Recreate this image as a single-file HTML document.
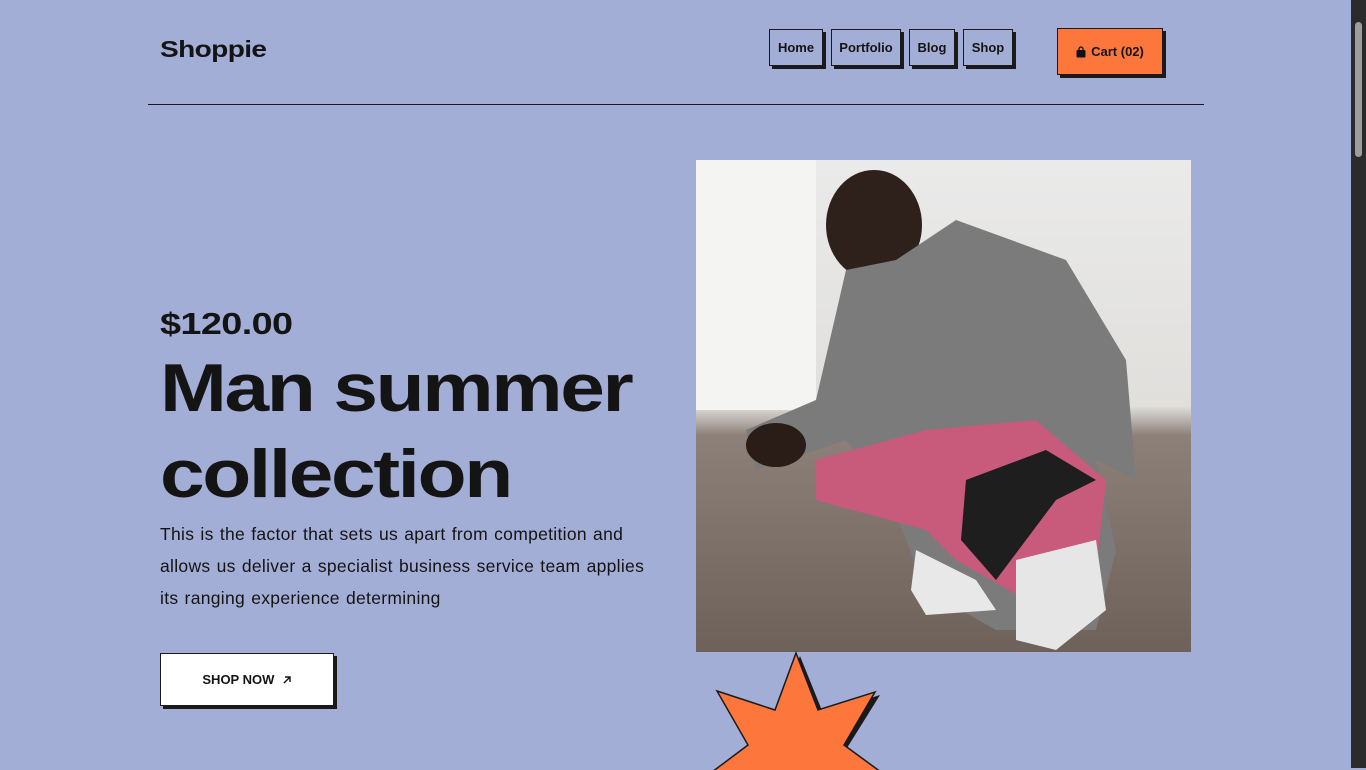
<!DOCTYPE html>
<html><head><style>
body{margin:0;width:1366px;height:768px;overflow:hidden;background:#a3aed6;font-family:"Liberation Sans",sans-serif;position:relative;color:#141414}
.logo{position:absolute;left:160px;top:36px;font-size:23px;font-weight:900;letter-spacing:-0.5px;transform:scaleX(1.22);transform-origin:left}
.nav{position:absolute;top:29px;height:37px;border:1px solid #1a1a1a;box-shadow:3px 3px 0 #1a1a1a;font-size:13px;font-weight:bold;display:flex;align-items:center;justify-content:center;box-sizing:border-box}
.cart{position:absolute;left:1057px;top:28px;width:106px;height:47px;background:#fd773d;border:1px solid #1a1a1a;box-shadow:3px 3px 0 #1a1a1a;box-sizing:border-box;font-size:13px;font-weight:bold;display:flex;align-items:center;justify-content:center;gap:5px}
.line{position:absolute;left:148px;top:104px;width:1056px;height:1px;background:#1a1a1a}
.price{position:absolute;left:160px;top:306px;font-size:31px;font-weight:900;letter-spacing:-0.5px;transform:scaleX(1.22);transform-origin:left}
h1{position:absolute;left:160px;top:345px;margin:0;font-size:68px;line-height:86px;font-weight:900;letter-spacing:-2px;transform:scaleX(1.18);transform-origin:left}
p{position:absolute;left:160px;top:518px;margin:0;width:510px;font-size:17.5px;line-height:32px;letter-spacing:0.3px;word-spacing:1px}
.shop{position:absolute;left:160px;top:653px;width:174px;height:53px;background:#fff;border:1px solid #1a1a1a;box-shadow:3px 3px 0 #1a1a1a;box-sizing:border-box;font-size:13px;font-weight:bold;display:flex;align-items:center;justify-content:center}
.photo{position:absolute;left:696px;top:160px;width:495px;height:492px;background:linear-gradient(180deg,#eaeaea 0,#e0dfdc 50%,#8c8078 56%,#6e6159 100%);overflow:hidden}
.sb{position:absolute;right:0;top:0;width:15px;height:768px;background:#2b2b2b}
.sb div{position:absolute;left:4px;top:22px;width:7px;height:135px;background:#9d9d9d;border-radius:4px}
</style></head><body>
<div class="logo">Shoppie</div>
<div class="nav" style="left:769px;width:54px">Home</div>
<div class="nav" style="left:831px;width:70px">Portfolio</div>
<div class="nav" style="left:909px;width:46px">Blog</div>
<div class="nav" style="left:963px;width:50px">Shop</div>
<div class="cart"><svg width="10" height="12" viewBox="0 0 10 12"><path d="M3 4V3a2 2 0 0 1 4 0v1" fill="none" stroke="#111" stroke-width="1.3"/><rect x="0.5" y="4" width="9" height="7.5" rx="1" fill="#111"/></svg>Cart (02)</div>
<div class="line"></div>
<div class="price">$120.00</div>
<h1>Man summer<br>collection</h1>
<p>This is the factor that sets us apart from competition and<br>allows us deliver a specialist business service team applies<br>its ranging experience determining</p>
<div class="shop">SHOP NOW&nbsp;&nbsp;<svg width="10" height="10" viewBox="0 0 10 10"><path d="M2 8L8 2M3 2h5v5" fill="none" stroke="#111" stroke-width="1.4"/></svg></div>
<div class="photo">
<svg width="495" height="492" viewBox="0 0 495 492">
<rect x="0" y="0" width="120" height="250" fill="#f4f4f2"/>
<ellipse cx="178" cy="65" rx="48" ry="55" fill="#2e211c"/>
<path d="M150 110 L120 240 L50 270 L60 310 L150 280 L190 330 L230 430 L300 470 L400 470 L420 390 L400 300 L440 320 L430 200 L370 100 L260 60 L200 100Z" fill="#7b7b7b"/>
<path d="M120 300 L230 270 L340 260 L410 320 L400 410 L330 440 L260 400 L230 370 L120 340Z" fill="#c85a7c"/>
<path d="M270 320 L350 290 L400 320 L360 340 L300 420 L265 380Z" fill="#1e1e1e"/>
<path d="M220 390 L280 420 L300 450 L230 455 L215 430Z" fill="#e8e8e8"/>
<path d="M320 400 L400 380 L410 450 L360 490 L320 480Z" fill="#e6e6e6"/>
<ellipse cx="80" cy="285" rx="30" ry="22" fill="#2a1d18"/>
</svg>
</div>
<svg style="position:absolute;left:700px;top:650px" width="200" height="120" viewBox="700 650 200 120">
<polygon points="800,656 823,713 880,695 847,748 885,775 715,775 752,748 720,694 778,711" fill="#1a1a1a"/>
<polygon points="796,653 818,710 875,692 844,745 885,775 708,775 748,745 717,691 775,710" fill="#fd773d" stroke="#1a1a1a" stroke-width="1.5"/>
</svg>
<div class="sb"><div></div></div>
</body></html>
